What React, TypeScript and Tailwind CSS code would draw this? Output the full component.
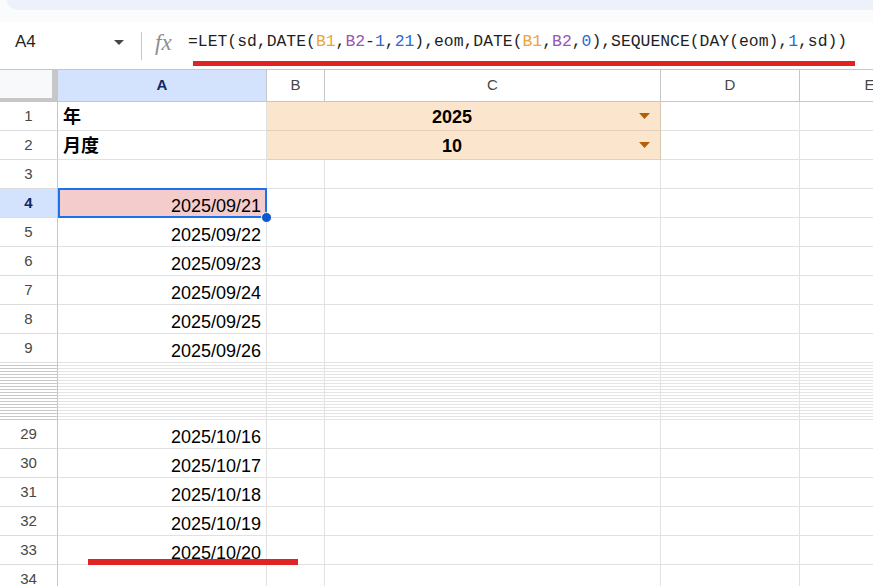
import React from 'react';

// column widths include the 1px right gridline
const COL = {
  head: 'w-[58px]',
  a: 'w-[209px]',
  b: 'w-[58px]',
  c: 'w-[336px]',
  d: 'w-[139px]',
  e: 'w-[140px]',
  bc: 'w-[394px]',
};

const GRID = 'border-r border-b border-[#e1e1e1] shrink-0';

function RowHead({ n, active = false }: { n?: number; active?: boolean }) {
  return (
    <div
      className={`${COL.head} h-full shrink-0 flex items-center justify-center border-r border-b border-r-[#c4c7c5] border-b-[#dadce0] text-[15px] ${
        active ? 'bg-[#d3e3fd] font-bold text-[#0b2a63]' : 'text-[#474747]'
      }`}
    >
      {n}
    </div>
  );
}

function DateCell({ value }: { value?: string }) {
  return (
    <div className={`${COL.a} ${GRID} h-full flex items-end justify-end pr-[5px] pb-[1px] text-[18px] leading-[20px] text-black`}>
      {value}
    </div>
  );
}

function Blank({ w }: { w: string }) {
  return <div className={`${w} ${GRID} h-full`} />;
}

function DropArrow() {
  return (
    <svg width="11" height="6" viewBox="0 0 11 6" className="shrink-0">
      <path d="M0 0h11L5.5 6z" fill="#b45f06" />
    </svg>
  );
}

function PickerRow({ n, label, value }: { n: number; label: string; value: string }) {
  return (
    <div className="flex h-[29px]">
      <RowHead n={n} />
      <div className={`${COL.a} ${GRID} h-full flex items-center pl-[5px] pt-[2px] text-[18px] font-bold text-black`}>
        {label}
      </div>
      <div className={`${COL.bc} h-full shrink-0 flex items-center bg-[#fce5cd] border-r border-b border-r-[#d8c8b6] border-b-[#e6d0b8]`}>
        <span className="flex-1 text-center pl-[2px] pt-[3px] text-[18px] font-bold text-black">{value}</span>
        <span className="pr-[10px] pl-[4px] flex items-center">
          <DropArrow />
        </span>
      </div>
      <Blank w={COL.d} />
      <Blank w={COL.e} />
    </div>
  );
}

function DateRow({ n, value }: { n: number; value?: string }) {
  return (
    <div className="flex h-[29px]">
      <RowHead n={n} />
      <DateCell value={value} />
      <Blank w={COL.b} />
      <Blank w={COL.c} />
      <Blank w={COL.d} />
      <Blank w={COL.e} />
    </div>
  );
}

function HiddenRow() {
  return (
    <div className="flex h-[3px]">
      <div className={`${COL.head} h-full shrink-0 border-r border-b border-r-[#c4c7c5] border-b-[#c8c8c8]`} />
      <div className={`${COL.a} h-full shrink-0 border-r border-b border-r-[#e1e1e1] border-b-[#e4e4e4]`} />
      <div className={`${COL.b} h-full shrink-0 border-r border-b border-r-[#e1e1e1] border-b-[#e4e4e4]`} />
      <div className={`${COL.c} h-full shrink-0 border-r border-b border-r-[#e1e1e1] border-b-[#e4e4e4]`} />
      <div className={`${COL.d} h-full shrink-0 border-r border-b border-r-[#e1e1e1] border-b-[#e4e4e4]`} />
      <div className={`${COL.e} h-full shrink-0 border-r border-b border-r-[#e1e1e1] border-b-[#e4e4e4]`} />
    </div>
  );
}

function ColHead({ w, label, active = false }: { w: string; label: string; active?: boolean }) {
  return (
    <div
      className={`${w} h-full shrink-0 flex items-center justify-center border-r border-[#c4c7c5] text-[15px] ${
        active ? 'bg-[#d3e3fd] font-bold text-[#0b2a63]' : 'text-[#474747]'
      }`}
    >
      {label}
    </div>
  );
}

function Formula() {
  const ref1 = 'text-[#eea43a]';
  const ref2 = 'text-[#9a55b8]';
  const num = 'text-[#2a6bd1]';
  return (
    <div className="font-['Liberation_Mono','DejaVu_Sans_Mono',monospace] text-[16.4px] leading-[24px] text-[#1f1f1f] whitespace-nowrap">
      =LET(sd,DATE(<span className={ref1}>B1</span>,<span className={ref2}>B2</span>-<span className={num}>1</span>,
      <span className={num}>21</span>),eom,DATE(<span className={ref1}>B1</span>,<span className={ref2}>B2</span>,
      <span className={num}>0</span>),SEQUENCE(DAY(eom),<span className={num}>1</span>,sd))
    </div>
  );
}

export default function App() {
  const early = ['2025/09/22', '2025/09/23', '2025/09/24', '2025/09/25', '2025/09/26'];
  const late = ['2025/10/16', '2025/10/17', '2025/10/18', '2025/10/19', '2025/10/20'];

  return (
    <div className="relative w-[873px] h-[586px] overflow-hidden bg-white font-['Liberation_Sans','Noto_Sans_CJK_JP',sans-serif]">
      {/* toolbar edge */}
      <div className="h-[22px] bg-[#f9fbfd]">
        <div className="ml-[7px] h-[10px] bg-[#edf2fa] rounded-bl-[10px]" />
      </div>

      {/* name box + formula bar */}
      <div className="flex h-[47px] items-start">
        <div className="w-[141px] shrink-0 flex items-center pt-[8px] pl-[15px] pr-[17px] h-full">
          <span className="text-[17px] leading-[24px] text-[#1f1f1f] self-start">A4</span>
          <span className="ml-auto self-start mt-[10px]">
            <svg width="10" height="5" viewBox="0 0 10 5">
              <path d="M0 0h10L5 5z" fill="#444746" />
            </svg>
          </span>
        </div>
        <div className="w-px h-[28px] mt-[10px] bg-[#c7c7c7] shrink-0" />
        <div className="w-[46px] shrink-0 pt-[8px] pl-[13px]">
          <span className="font-['Liberation_Serif',serif] italic text-[23px] leading-[26px] text-[#8e8e8e]">fx</span>
        </div>
        <div className="pt-[8px]">
          <Formula />
        </div>
      </div>

      {/* column headers */}
      <div className="flex h-[33px] border-t border-b border-[#c4c7c5]">
        <div className={`${COL.head} h-full shrink-0 bg-[#f8f9fa] border-r-[6px] border-b-[3px] border-[#c7c7c7]`} />
        <ColHead w={COL.a} label="A" active />
        <ColHead w={COL.b} label="B" />
        <ColHead w={COL.c} label="C" />
        <ColHead w={COL.d} label="D" />
        <ColHead w={COL.e} label="E" />
      </div>

      {/* rows */}
      <div className="flex flex-col">
        <PickerRow n={1} label="年" value="2025" />
        <PickerRow n={2} label="月度" value="10" />
        <DateRow n={3} />

        <div className="flex h-[29px]">
          <RowHead n={4} active />
          <div className={`${COL.a} ${GRID} h-full relative bg-[#f4cccc] flex items-end justify-end pr-[5px] pb-[1px] text-[18px] leading-[20px] text-black`}>
            2025/09/21
            <div className="absolute -top-px left-0 -right-px -bottom-px border-2 border-[#1a73e8]" />
            <div className="absolute -right-[6px] -bottom-[6px] w-[11px] h-[11px] rounded-full bg-[#0b57d0] border border-white" />
          </div>
          <Blank w={COL.b} />
          <Blank w={COL.c} />
          <Blank w={COL.d} />
          <Blank w={COL.e} />
        </div>

        {early.map((d, i) => (
          <DateRow key={d} n={5 + i} value={d} />
        ))}

        {Array.from({ length: 19 }).map((_, i) => (
          <HiddenRow key={i} />
        ))}

        {late.map((d, i) => (
          <DateRow key={d} n={29 + i} value={d} />
        ))}
        <DateRow n={34} />
      </div>

      {/* red markers */}
      <div className="absolute left-[193px] top-[61px] w-[662px] h-[5px] bg-[#e02424]" />
      <div className="absolute left-[88px] top-[559px] w-[210px] h-[6px] bg-[#e02424]" />
    </div>
  );
}
